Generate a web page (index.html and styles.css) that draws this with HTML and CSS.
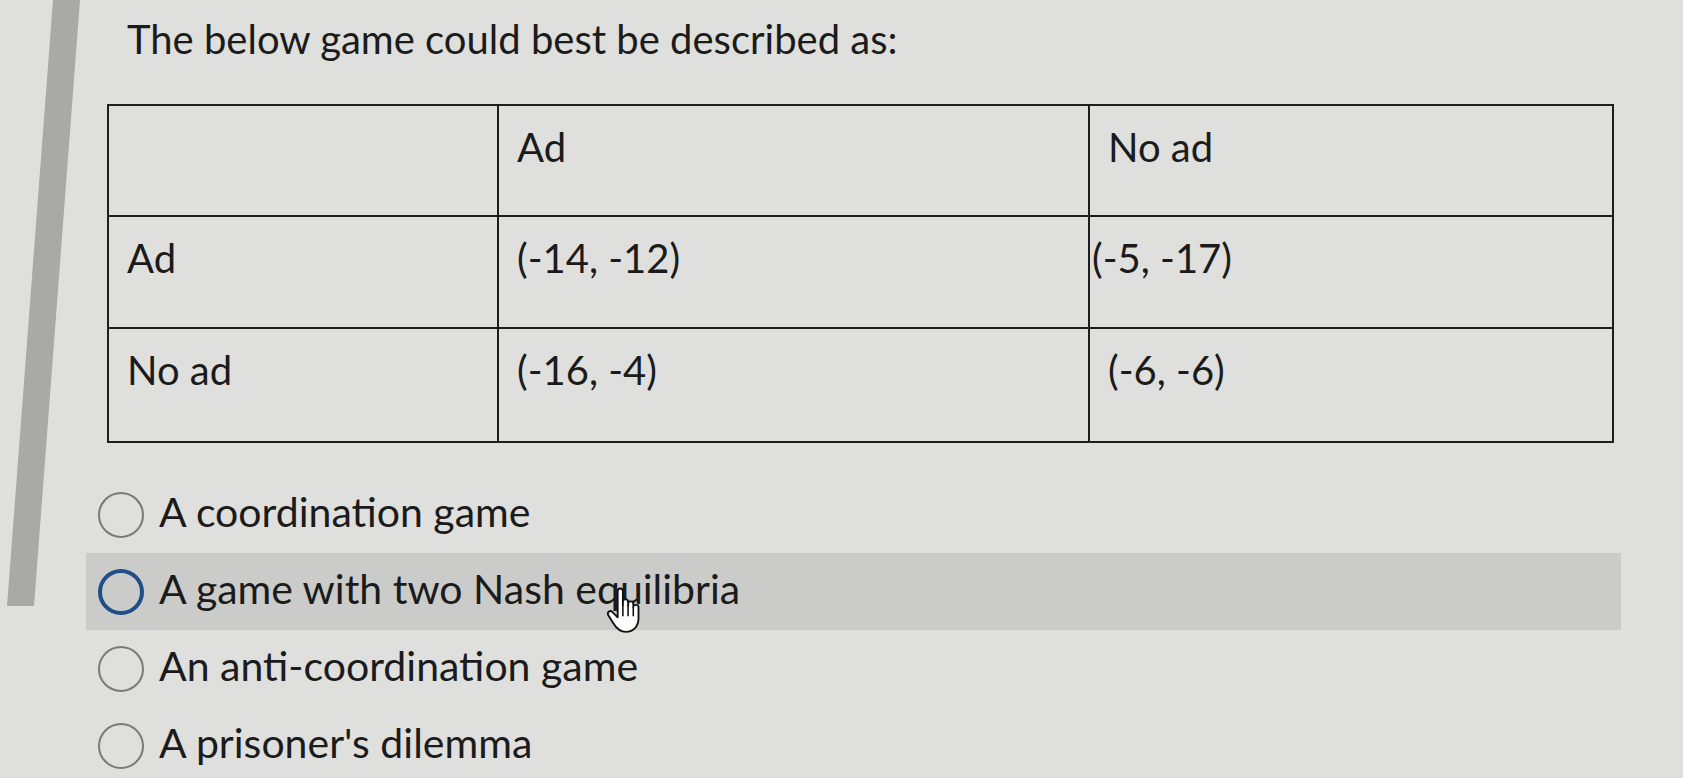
FILE: index.html
```html
<!DOCTYPE html>
<html>
<head>
<meta charset="utf-8">
<link rel="stylesheet" href="styles.css">
</head>
<body>
<div class="page">
  <div class="side-bar"></div>
  <div class="question">
    <h1 class="title">The below game could best be described as:</h1>
    <table class="payoff">
      <tr class="r1">
        <td class="c1"></td>
        <td class="c2">Ad</td>
        <td class="c3">No ad</td>
      </tr>
      <tr class="r2">
        <td class="c1">Ad</td>
        <td class="c2">(-14, -12)</td>
        <td class="c3 tight">(-5, -17)</td>
      </tr>
      <tr class="r3">
        <td class="c1">No ad</td>
        <td class="c2">(-16, -4)</td>
        <td class="c3">(-6, -6)</td>
      </tr>
    </table>
    <ul class="options">
      <li class="option"><span class="radio"></span><span class="label">A coordination game</span></li>
      <li class="option hover"><span class="radio focus"></span><span class="label">A game with two Nash equilibria</span>
        <svg class="cursor" width="42" height="50" viewBox="0 0 40 48">
          <path d="M12 6 C12 2.5 17 2.5 17 6 L17 19 L17 16 C17 13 22 13 22 16 L22 20 L22 18 C22 15 27 15 27 18 L27 21 C27 18.5 32 18.5 32 21 L32 32 C32 40 27 45 20 45 C14 45 11 42 8 37 L3 29 C1.5 26.5 4.5 23.5 7 26 L12 31 Z" fill="#ffffff" stroke="#111" stroke-width="1.8" stroke-linejoin="round"/>
          <path d="M17 19 L17 30 M22 20 L22 30 M27 21 L27 30" stroke="#111" stroke-width="1.5" fill="none"/>
        </svg>
      </li>
      <li class="option"><span class="radio"></span><span class="label">An anti-coordination game</span></li>
      <li class="option"><span class="radio"></span><span class="label">A prisoner's dilemma</span></li>
    </ul>
  </div>
</div>
</body>
</html>
```
FILE: styles.css
```css
html, body {
  margin: 0;
  padding: 0;
}
body {
  background: #dfdfdd;
  font-family: Lato, "Open Sans", sans-serif;
  color: #1b1b1b;
  overflow: hidden;
}
.page {
  position: relative;
  width: 1683px;
  height: 778px;
}
.side-bar {
  position: absolute;
  left: 0;
  top: 0;
  width: 90px;
  height: 606px;
  background: #a9a9a7;
  clip-path: polygon(53px 0, 80px 0, 34px 606px, 7px 606px);
}
.question {
  display: flex;
  flex-direction: column;
  padding-left: 107px;
}
.title {
  margin: 15px 0 0 20px;
  font-weight: 400;
  font-size: 40px;
  line-height: 48px;
  height: 48px;
}
.payoff {
  margin-top: 41px;
  border-collapse: collapse;
  width: 1505px;
  table-layout: fixed;
}
.payoff td {
  border: 2px solid #1e1e1e;
  vertical-align: top;
  font-size: 40px;
  line-height: 48px;
  padding: 17px 0 0 18px;
  box-sizing: border-box;
}
.payoff .c1 { width: 390px; }
.payoff .c2 { width: 591px; }
.payoff .c3 { width: 524px; }
.payoff .tight { padding-left: 2px; }
.r1 td { height: 111px; }
.r2 td { height: 112px; }
.r3 td { height: 114px; }
.options {
  list-style: none;
  margin: 33px 0 0 -21px;
  padding: 0;
  display: flex;
  flex-direction: column;
}
.option {
  position: relative;
  display: flex;
  align-items: center;
  gap: 15px;
  height: 77px;
  width: 1535px;
  padding-left: 12px;
  box-sizing: border-box;
}
.option.hover {
  background: #cbcbc9;
}
.radio {
  width: 46px;
  height: 46px;
  border-radius: 50%;
  border: 2px solid #7a7a7a;
  box-sizing: border-box;
  flex: none;
}
.radio.focus {
  border: 4px solid #1f4f86;
}
.label {
  font-size: 41px;
  line-height: 48px;
  position: relative;
  top: -3px;
}
.cursor {
  position: absolute;
  left: 519px;
  top: 32px;
}
```
